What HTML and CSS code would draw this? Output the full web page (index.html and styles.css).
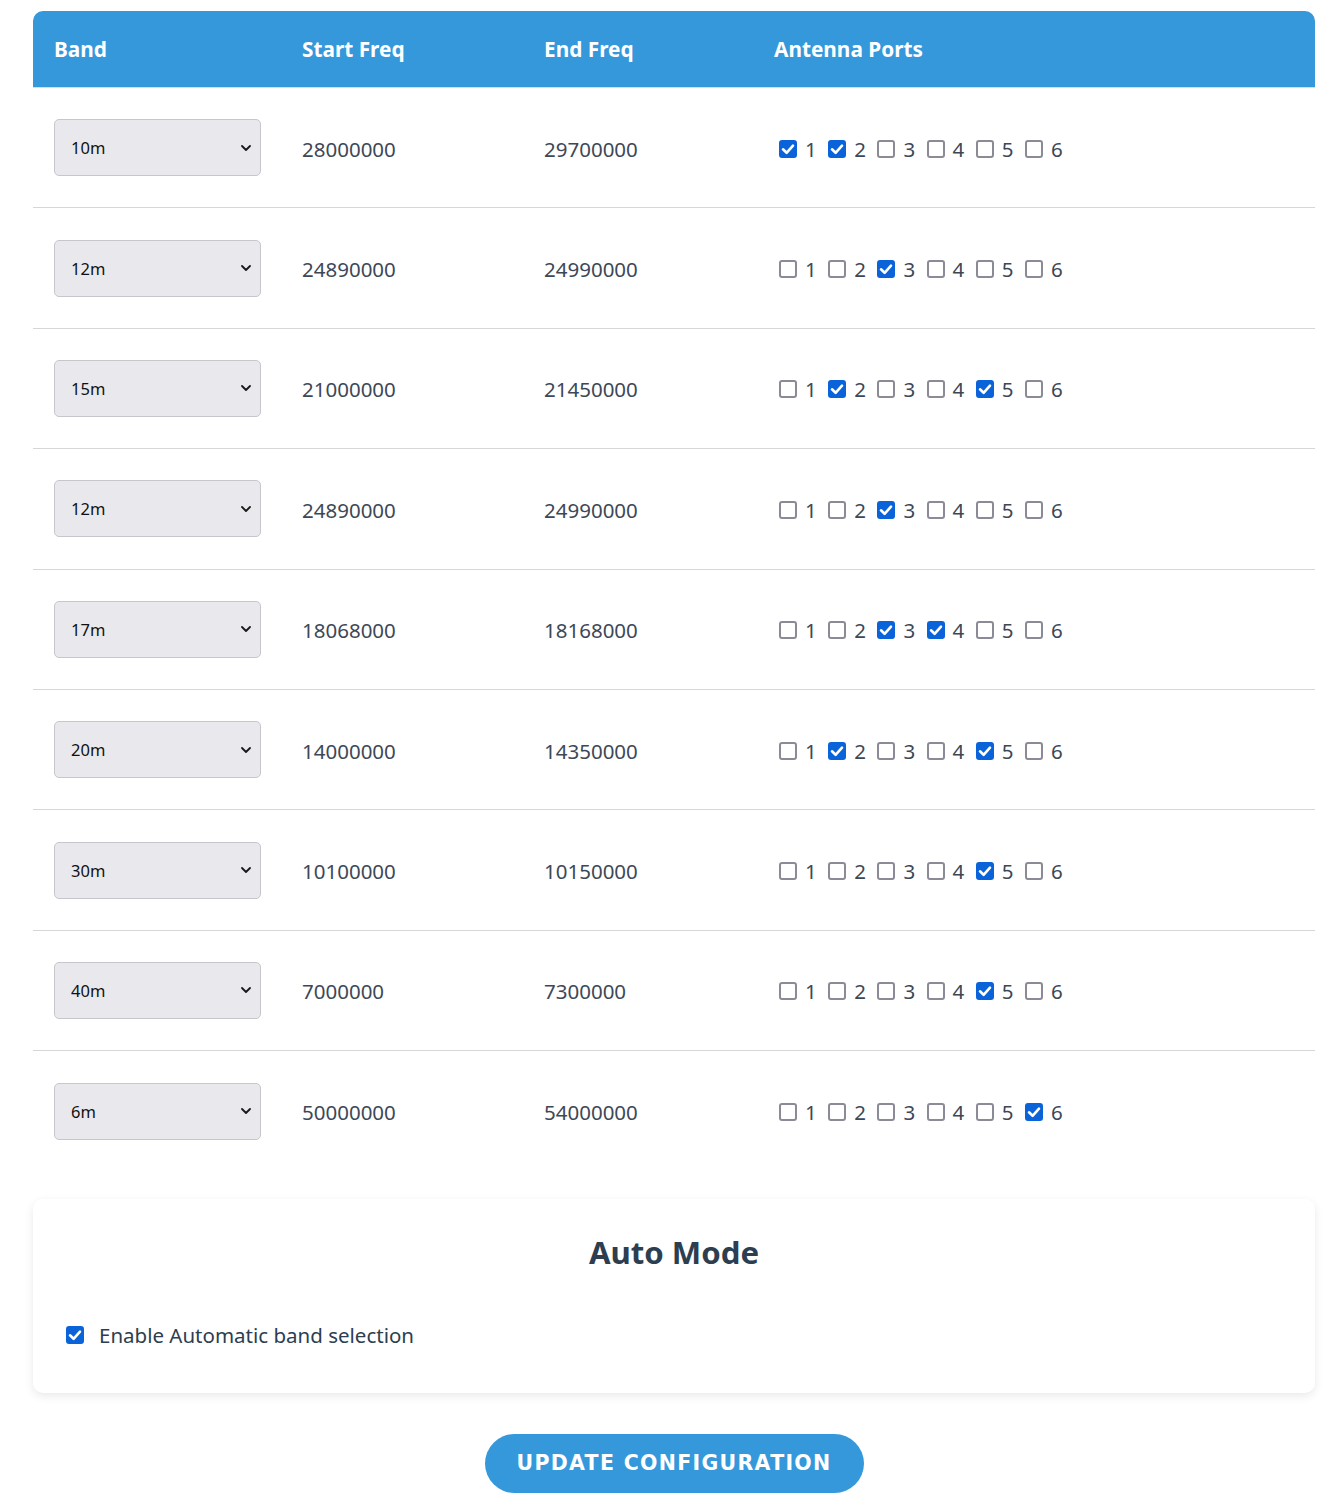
FILE: index.html
```html
<!DOCTYPE html>
<html lang="en">
<head>
<meta charset="utf-8">
<title>Band Configuration</title>
<link rel="stylesheet" href="styles.css">
</head>
<body>
<div class="page">
  <div class="table">
    <div class="thead">
      <div class="cell">Band</div>
      <div class="cell">Start Freq</div>
      <div class="cell">End Freq</div>
      <div class="cell">Antenna Ports</div>
    </div>

    <div class="row">
      <div class="cell"><div class="select"><span>10m</span><svg class="chev" viewBox="0 0 10 6"><path d="M1 1L5 5L9 1"/></svg></div></div>
      <div class="cell num">28000000</div>
      <div class="cell num">29700000</div>
      <div class="cell ports">
        <span class="port"><span class="box on"><svg viewBox="0 0 18 18"><path d="M4 9.3L7.6 12.8L14 5.6"/></svg></span>1</span>
        <span class="port"><span class="box on"><svg viewBox="0 0 18 18"><path d="M4 9.3L7.6 12.8L14 5.6"/></svg></span>2</span>
        <span class="port"><span class="box"></span>3</span>
        <span class="port"><span class="box"></span>4</span>
        <span class="port"><span class="box"></span>5</span>
        <span class="port"><span class="box"></span>6</span>
      </div>
    </div>

    <div class="row">
      <div class="cell"><div class="select"><span>12m</span><svg class="chev" viewBox="0 0 10 6"><path d="M1 1L5 5L9 1"/></svg></div></div>
      <div class="cell num">24890000</div>
      <div class="cell num">24990000</div>
      <div class="cell ports">
        <span class="port"><span class="box"></span>1</span>
        <span class="port"><span class="box"></span>2</span>
        <span class="port"><span class="box on"><svg viewBox="0 0 18 18"><path d="M4 9.3L7.6 12.8L14 5.6"/></svg></span>3</span>
        <span class="port"><span class="box"></span>4</span>
        <span class="port"><span class="box"></span>5</span>
        <span class="port"><span class="box"></span>6</span>
      </div>
    </div>

    <div class="row">
      <div class="cell"><div class="select"><span>15m</span><svg class="chev" viewBox="0 0 10 6"><path d="M1 1L5 5L9 1"/></svg></div></div>
      <div class="cell num">21000000</div>
      <div class="cell num">21450000</div>
      <div class="cell ports">
        <span class="port"><span class="box"></span>1</span>
        <span class="port"><span class="box on"><svg viewBox="0 0 18 18"><path d="M4 9.3L7.6 12.8L14 5.6"/></svg></span>2</span>
        <span class="port"><span class="box"></span>3</span>
        <span class="port"><span class="box"></span>4</span>
        <span class="port"><span class="box on"><svg viewBox="0 0 18 18"><path d="M4 9.3L7.6 12.8L14 5.6"/></svg></span>5</span>
        <span class="port"><span class="box"></span>6</span>
      </div>
    </div>

    <div class="row">
      <div class="cell"><div class="select"><span>12m</span><svg class="chev" viewBox="0 0 10 6"><path d="M1 1L5 5L9 1"/></svg></div></div>
      <div class="cell num">24890000</div>
      <div class="cell num">24990000</div>
      <div class="cell ports">
        <span class="port"><span class="box"></span>1</span>
        <span class="port"><span class="box"></span>2</span>
        <span class="port"><span class="box on"><svg viewBox="0 0 18 18"><path d="M4 9.3L7.6 12.8L14 5.6"/></svg></span>3</span>
        <span class="port"><span class="box"></span>4</span>
        <span class="port"><span class="box"></span>5</span>
        <span class="port"><span class="box"></span>6</span>
      </div>
    </div>

    <div class="row">
      <div class="cell"><div class="select"><span>17m</span><svg class="chev" viewBox="0 0 10 6"><path d="M1 1L5 5L9 1"/></svg></div></div>
      <div class="cell num">18068000</div>
      <div class="cell num">18168000</div>
      <div class="cell ports">
        <span class="port"><span class="box"></span>1</span>
        <span class="port"><span class="box"></span>2</span>
        <span class="port"><span class="box on"><svg viewBox="0 0 18 18"><path d="M4 9.3L7.6 12.8L14 5.6"/></svg></span>3</span>
        <span class="port"><span class="box on"><svg viewBox="0 0 18 18"><path d="M4 9.3L7.6 12.8L14 5.6"/></svg></span>4</span>
        <span class="port"><span class="box"></span>5</span>
        <span class="port"><span class="box"></span>6</span>
      </div>
    </div>

    <div class="row">
      <div class="cell"><div class="select"><span>20m</span><svg class="chev" viewBox="0 0 10 6"><path d="M1 1L5 5L9 1"/></svg></div></div>
      <div class="cell num">14000000</div>
      <div class="cell num">14350000</div>
      <div class="cell ports">
        <span class="port"><span class="box"></span>1</span>
        <span class="port"><span class="box on"><svg viewBox="0 0 18 18"><path d="M4 9.3L7.6 12.8L14 5.6"/></svg></span>2</span>
        <span class="port"><span class="box"></span>3</span>
        <span class="port"><span class="box"></span>4</span>
        <span class="port"><span class="box on"><svg viewBox="0 0 18 18"><path d="M4 9.3L7.6 12.8L14 5.6"/></svg></span>5</span>
        <span class="port"><span class="box"></span>6</span>
      </div>
    </div>

    <div class="row">
      <div class="cell"><div class="select"><span>30m</span><svg class="chev" viewBox="0 0 10 6"><path d="M1 1L5 5L9 1"/></svg></div></div>
      <div class="cell num">10100000</div>
      <div class="cell num">10150000</div>
      <div class="cell ports">
        <span class="port"><span class="box"></span>1</span>
        <span class="port"><span class="box"></span>2</span>
        <span class="port"><span class="box"></span>3</span>
        <span class="port"><span class="box"></span>4</span>
        <span class="port"><span class="box on"><svg viewBox="0 0 18 18"><path d="M4 9.3L7.6 12.8L14 5.6"/></svg></span>5</span>
        <span class="port"><span class="box"></span>6</span>
      </div>
    </div>

    <div class="row">
      <div class="cell"><div class="select"><span>40m</span><svg class="chev" viewBox="0 0 10 6"><path d="M1 1L5 5L9 1"/></svg></div></div>
      <div class="cell num">7000000</div>
      <div class="cell num">7300000</div>
      <div class="cell ports">
        <span class="port"><span class="box"></span>1</span>
        <span class="port"><span class="box"></span>2</span>
        <span class="port"><span class="box"></span>3</span>
        <span class="port"><span class="box"></span>4</span>
        <span class="port"><span class="box on"><svg viewBox="0 0 18 18"><path d="M4 9.3L7.6 12.8L14 5.6"/></svg></span>5</span>
        <span class="port"><span class="box"></span>6</span>
      </div>
    </div>

    <div class="row last">
      <div class="cell"><div class="select"><span>6m</span><svg class="chev" viewBox="0 0 10 6"><path d="M1 1L5 5L9 1"/></svg></div></div>
      <div class="cell num">50000000</div>
      <div class="cell num">54000000</div>
      <div class="cell ports">
        <span class="port"><span class="box"></span>1</span>
        <span class="port"><span class="box"></span>2</span>
        <span class="port"><span class="box"></span>3</span>
        <span class="port"><span class="box"></span>4</span>
        <span class="port"><span class="box"></span>5</span>
        <span class="port"><span class="box on"><svg viewBox="0 0 18 18"><path d="M4 9.3L7.6 12.8L14 5.6"/></svg></span>6</span>
      </div>
    </div>
  </div>

  <section class="card">
    <h2 class="card-title">Auto Mode</h2>
    <label class="auto">
      <span class="box on"><svg viewBox="0 0 18 18"><path d="M4 9.3L7.6 12.8L14 5.6"/></svg></span>
      <span>Enable Automatic band selection</span>
    </label>
  </section>

  <div class="actions">
    <button class="btn" type="button">Update Configuration</button>
  </div>
</div>
</body>
</html>
```

FILE: styles.css
```css
html, body {
  margin: 0;
  padding: 0;
  background: #ffffff;
}

body {
  font-family: "Noto Sans", "Open Sans", sans-serif;
  font-size: 20.5px;
  color: #2c3e50;
}

.page {
  margin: 11px 12px 0 33px;
  padding-bottom: 13px;
}

.table {
  display: flex;
  flex-direction: column;
}

.thead,
.row {
  display: grid;
  grid-template-columns: 248px 242px 230px 1fr;
  align-items: center;
  box-sizing: border-box;
}

.thead {
  height: 77px;
  background: #3498db;
  color: #ffffff;
  font-weight: 700;
  font-size: 20.8px;
  border-radius: 10px 10px 0 0;
  border-bottom: 1px solid #dcdcdc;
}

.row {
  height: 120.4px;
  border-bottom: 1px solid #d6d6d6;
}

.row.last {
  border-bottom: none;
}

.cell {
  padding: 0 21px;
}

.num {
  color: #3d4857;
  padding-top: 2px;
}

.select {
  box-sizing: border-box;
  width: 207px;
  height: 57px;
  display: flex;
  align-items: center;
  justify-content: space-between;
  padding: 0 9px 0 16px;
  background: #e9e9ed;
  border: 1px solid #c6c6cc;
  border-radius: 5px;
  font-size: 16.5px;
  color: #111111;
}

.chev {
  width: 10px;
  height: 6px;
  fill: none;
  stroke: #1a1a1a;
  stroke-width: 1.8;
  stroke-linecap: round;
  stroke-linejoin: round;
}

.ports {
  display: flex;
  align-items: center;
  padding-top: 2px;
}

.port {
  display: inline-flex;
  align-items: center;
  width: 49.2px;
  flex: none;
  color: #3d4857;
}

.box {
  box-sizing: border-box;
  width: 18px;
  height: 18px;
  flex: none;
  border: 2px solid #8b8b98;
  border-radius: 3px;
  background: #ffffff;
  display: inline-flex;
  align-items: center;
  justify-content: center;
}

.port .box {
  margin: 0 8px 0 5px;
}

.box.on {
  background: #0b63d9;
  border-color: #0b63d9;
}

.box svg {
  width: 18px;
  height: 18px;
  flex: none;
  fill: none;
  stroke: #ffffff;
  stroke-width: 2.6;
  stroke-linecap: round;
  stroke-linejoin: round;
}

.card {
  margin-top: 27px;
  background: #ffffff;
  border-radius: 10px;
  box-shadow: 0 3px 10px rgba(0, 0, 0, 0.09);
  padding: 26px 33px 43px;
}

.card-title {
  margin: 8px 0 48px;
  text-align: center;
  font-size: 31.2px;
  line-height: 39px;
  font-weight: 700;
  color: #2c3e50;
}

.auto {
  display: flex;
  align-items: center;
  height: 30px;
  font-size: 20.5px;
  color: #2c3e50;
}

.auto .box {
  margin-right: 15px;
}

.actions {
  display: flex;
  justify-content: center;
  margin-top: 41px;
}

.btn {
  width: 379px;
  height: 59px;
  border: none;
  border-radius: 30px;
  background: #3498db;
  color: #ffffff;
  font-family: "DejaVu Sans", Verdana, sans-serif;
  font-weight: 700;
  font-size: 20.5px;
  letter-spacing: 1.3px;
  text-transform: uppercase;
  padding: 0;
}
```
